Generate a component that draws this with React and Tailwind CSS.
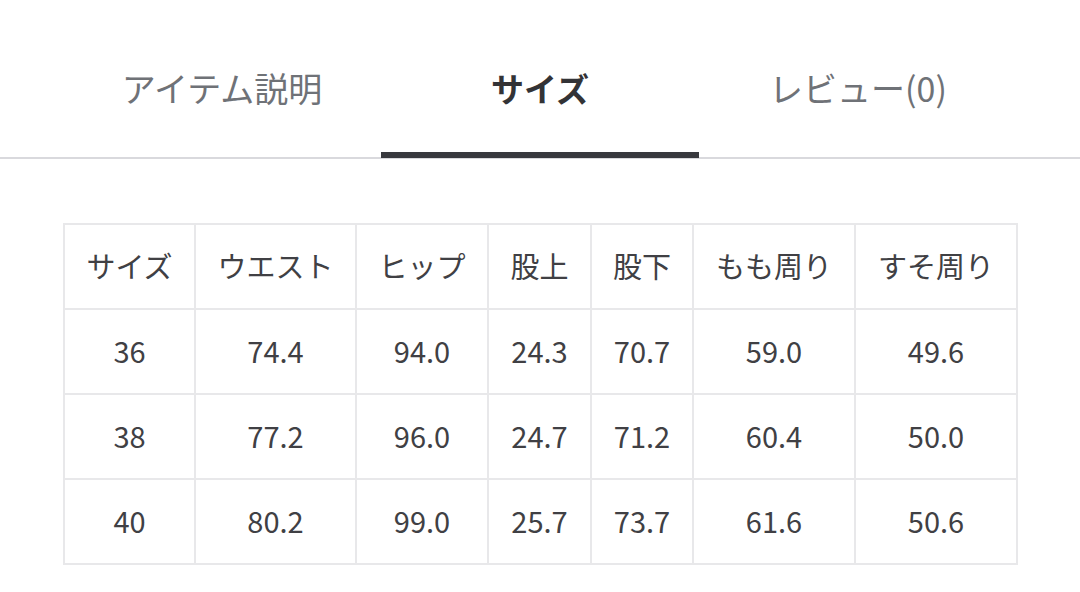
const tabs = ["アイテム説明", "サイズ", "レビュー(0)"];

const headers = ["サイズ", "ウエスト", "ヒップ", "股上", "股下", "もも周り", "すそ周り"];
const widths = ["w-[131px]", "w-[161px]", "w-[132px]", "w-[103px]", "w-[102px]", "w-[162px]", "w-[162px]"];

const rows = [
  ["36", "74.4", "94.0", "24.3", "70.7", "59.0", "49.6"],
  ["38", "77.2", "96.0", "24.7", "71.2", "60.4", "50.0"],
  ["40", "80.2", "99.0", "25.7", "73.7", "61.6", "50.6"],
];

export default function App() {
  return (
    <div className="w-[1080px] h-[592px] bg-white overflow-hidden font-['Noto_Sans_CJK_JP','Noto_Sans',sans-serif]">
      {/* Tabs */}
      <div className="border-b-2 border-[#d9d9dd]">
        <div className="w-[954px] mx-auto grid grid-cols-3">
          {tabs.map((t, i) => (
            <div key={t} className="relative h-[157px] flex justify-center pt-[69px]">
              <span
                className={
                  i === 1
                    ? "text-[33px] leading-[38px] font-bold text-[#333336]"
                    : "text-[34px] leading-[38px] text-[#6f7277]"
                }
              >
                {t}
              </span>
              {i === 1 && (
                <span className="absolute left-0 right-0 bottom-[-1px] h-[6px] bg-[#38393e]" />
              )}
            </div>
          ))}
        </div>
      </div>

      {/* Size table */}
      <div className="w-[954px] mx-auto pt-[64px]">
        <table className="border-collapse table-fixed w-[953px] text-[29px] leading-[36px] text-[#404044]">
          <thead>
            <tr>
              {headers.map((h, i) => (
                <th key={h} className={`${widths[i]} h-[85px] pb-[4px] border-2 border-[#e8e8ea] font-normal text-center`}>
                  {h}
                </th>
              ))}
            </tr>
          </thead>
          <tbody>
            {rows.map((r) => (
              <tr key={r[0]}>
                {r.map((c, j) => (
                  <td key={j} className="h-[85px] pb-[4px] border-2 border-[#e8e8ea] text-center">
                    {c}
                  </td>
                ))}
              </tr>
            ))}
          </tbody>
        </table>
      </div>
    </div>
  );
}
